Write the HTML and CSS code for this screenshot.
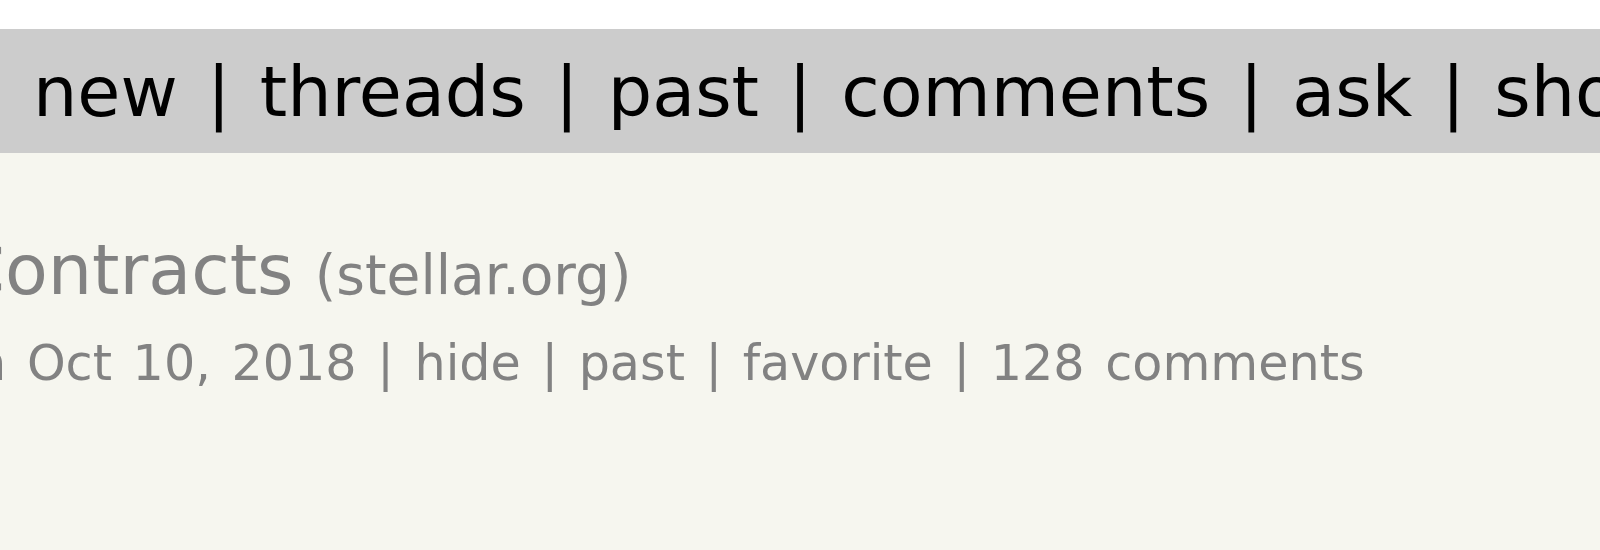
FILE: index.html
```html
<!DOCTYPE html>
<html lang="en">
<head>
<meta charset="utf-8">
<title>Hacker News</title>
<link rel="stylesheet" href="styles.css">
</head>
<body>
<div class="page">
  <div class="topbar">
    <span class="pagetop"><a href="#">new</a> | <a href="#">threads</a> | <a href="#">past</a> | <a href="#">comments</a> | <a href="#">ask</a> | <a href="#">show</a> | <a href="#">jobs</a> | <a href="#">submit</a></span>
  </div>
  <div class="content">
    <div class="titleline"><span class="title-shift"><a class="storylink" href="#">Contracts</a> <span class="sitebit">(<a href="#">stellar.org</a>)</span></span></div>
    <div class="subtext"><span class="sub-shift">on Oct 10, 2018 | <a href="#">hide</a> | <a href="#">past</a> | <a href="#">favorite</a> | <a href="#">128&nbsp;comments</a></span></div>
  </div>
</div>
</body>
</html>
```
FILE: styles.css
```css
html, body {
  margin: 0;
  padding: 0;
  background: #ffffff;
}
body {
  font-family: Verdana, "DejaVu Sans", sans-serif;
  overflow: hidden;
}
a {
  color: inherit;
  text-decoration: none;
}
.page {
  padding-top: 29px;
  width: 1600px;
  height: 550px;
  box-sizing: border-box;
  display: flex;
  flex-direction: column;
}
.topbar {
  background: #cccccc;
  height: 124px;
  box-sizing: border-box;
  padding: 20px 0 0 33px;
  white-space: nowrap;
  overflow: hidden;
}
.pagetop {
  font-size: 70px;
  line-height: 86px;
  word-spacing: 7px;
  color: #000000;
}
.content {
  flex: 1;
  background: #f6f6ef;
  overflow: hidden;
}
.titleline {
  white-space: nowrap;
  font-size: 70px;
  line-height: 86px;
  word-spacing: -1px;
  color: #828282;
  padding-top: 74px;
}
.title-shift {
  display: inline-block;
  margin-left: -44px;
}
.sitebit {
  font-size: 55px;
}
.subtext {
  white-space: nowrap;
  font-size: 49.2px;
  line-height: 60px;
  word-spacing: 5px;
  color: #828282;
  padding-top: 15px;
}
.sub-shift {
  display: inline-block;
  margin-left: -55px;
}
```
